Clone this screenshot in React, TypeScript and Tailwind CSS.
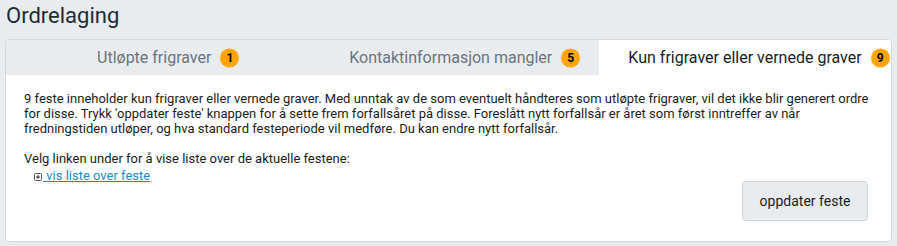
import { useState } from "react";

const TABS = [
  { label: "Utløpte frigraver", count: 1 },
  { label: "Kontaktinformasjon mangler", count: 5 },
  { label: "Kun frigraver eller vernede graver", count: 9 },
];

function PlusBox() {
  return (
    <svg width="8" height="8" viewBox="0 0 8 8" className="mr-[1px] inline-block align-[-1px]">
      <rect x="0.5" y="0.5" width="7" height="7" rx="1" fill="none" stroke="#555" strokeWidth="1" />
      <path d="M2 4h4M4 2v4" stroke="#333" strokeWidth="1" />
    </svg>
  );
}

export default function App() {
  const [active, setActive] = useState(2);

  return (
    <div
      className="h-[246px] w-[897px] bg-[#e9ecef] px-[5px] pt-[1px]"
      style={{ fontFamily: "Roboto, 'Liberation Sans', sans-serif" }}
    >
      <h1 className="pl-[1px] text-[22px] leading-[30px] text-[#1e2b38]">Ordrelaging</h1>
      <div className="mt-[8px] w-[887px] overflow-hidden rounded-[4px] border border-[#d3d7dc] bg-white">
        <div className="flex h-[35px] bg-[#e9ecef]">
          {TABS.map((t, i) => (
            <button
              key={t.label}
              onClick={() => setActive(i)}
              className={`flex items-center justify-center text-[16px] ${
                i === 2 ? "w-[292px]" : "flex-1"
              } ${i === active ? "bg-white text-[#1a1d21]" : "text-[#6b7480]"}`}
            >
              <span className="relative">
                {t.label}
                <span className="absolute left-[calc(100%+9px)] top-1/2 flex h-[19px] w-[19px] -translate-y-1/2 items-center justify-center rounded-full bg-[#ffa500] text-[12px] font-bold text-black">
                  {t.count}
                </span>
              </span>
            </button>
          ))}
        </div>
        <div className="h-[166px] pl-[18px] pr-[22px] pt-[16px] text-[13px] leading-[15px] text-[#1a1d21]">
          <p>
            9 feste inneholder kun frigraver eller vernede graver. Med unntak av de som eventuelt håndteres som
            utløpte frigraver, vil det ikke blir generert ordre for disse. Trykk 'oppdater feste' knappen for å
            sette frem forfallsåret på disse. Foreslått nytt forfallsår er året som først inntreffer av når
            fredningstiden utløper, og hva standard festeperiode vil medføre. Du kan endre nytt forfallsår.
          </p>
          <p className="mt-[15px]">Velg linken under for å vise liste over de aktuelle festene:</p>
          <div className="pl-[10px] pt-[2px]">
            <PlusBox />
            <a href="#" className="text-[#1b8dbb] underline">
              {" "}vis liste over feste
            </a>
          </div>
          <div className="-mt-[2px] flex justify-end pr-[1px]">
            <button className="h-[40px] w-[126px] rounded-[4px] border border-[#d0d4d9] bg-[#e9ecef] text-[14px] text-[#1a1d21]">
              oppdater feste
            </button>
          </div>
        </div>
      </div>
    </div>
  );
}
